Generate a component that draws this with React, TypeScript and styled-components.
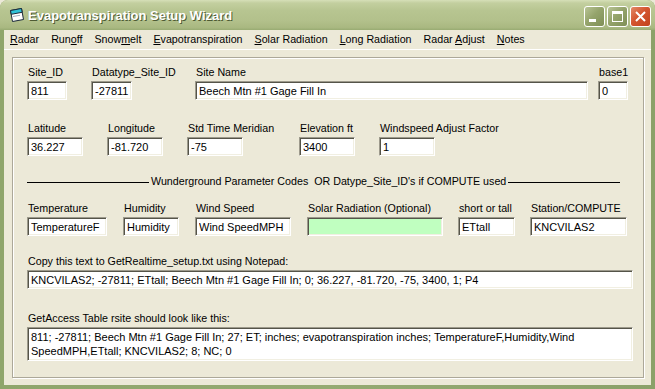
import styled, { createGlobalStyle } from "styled-components";

const GlobalStyle = createGlobalStyle`
  html, body {
    margin: 0;
    padding: 0;
    background: #ece9d8;
  }
  body {
    width: 655px;
    height: 389px;
    overflow: hidden;
    font-family: "Liberation Sans", Arial, sans-serif;
  }
`;

type MenuEntry = { pre: string; key: string; post: string };

const menu: MenuEntry[] = [
  { pre: "", key: "R", post: "adar" },
  { pre: "Run", key: "o", post: "ff" },
  { pre: "Snow", key: "m", post: "elt" },
  { pre: "", key: "E", post: "vapotranspiration" },
  { pre: "", key: "S", post: "olar Radiation" },
  { pre: "", key: "L", post: "ong Radiation" },
  { pre: "Radar ", key: "A", post: "djust" },
  { pre: "", key: "N", post: "otes" },
];

type FieldDef = { label: string; value: string; w: number; at: number; green?: boolean };

const row1: FieldDef[] = [
  { label: "Site_ID", value: "811", w: 40, at: 0 },
  { label: "Datatype_Site_ID", value: "-27811", w: 41, at: 24 },
  { label: "Site Name", value: "Beech Mtn #1 Gage Fill In", w: 393, at: 63 },
  { label: "base1", value: "0", w: 30, at: 10 },
];

const row2: FieldDef[] = [
  { label: "Latitude", value: "36.227", w: 56, at: 0 },
  { label: "Longitude", value: "-81.720", w: 56, at: 24 },
  { label: "Std Time Meridian", value: "-75", w: 56, at: 24 },
  { label: "Elevation ft", value: "3400", w: 56, at: 56 },
  { label: "Windspeed Adjust Factor", value: "1", w: 56, at: 24 },
];

const row3: FieldDef[] = [
  { label: "Temperature", value: "TemperatureF", w: 80, at: 0 },
  { label: "Humidity", value: "Humidity", w: 56, at: 16 },
  { label: "Wind Speed", value: "Wind SpeedMPH", w: 96, at: 16 },
  { label: "Solar Radiation (Optional)", value: "", w: 136, at: 16, green: true },
  { label: "short or tall", value: "ETtall", w: 57, at: 15 },
  { label: "Station/COMPUTE", value: "KNCVILAS2", w: 97, at: 15 },
];

function FieldRow({ fields, top }: { fields: FieldDef[]; top: number }) {
  return (
    <Row $top={top}>
      {fields.map((f) => (
        <Field key={f.label} $w={f.w} $at={f.at}>
          <Label>{f.label}</Label>
          <TextBox readOnly value={f.value} $green={f.green} />
        </Field>
      ))}
    </Row>
  );
}

function FormIcon() {
  return (
    <svg width="16" height="16" viewBox="0 0 16 16">
      <path d="M1.5 3.5 L12.5 1.5 L14.5 12.5 L3.5 14.5 Z" fill="#fff" stroke="#1b2a3a" />
      <path d="M1.5 3.5 L12.5 1.5 L13.2 5.3 L2.2 7.3 Z" fill="#2fc3d8" stroke="#1b2a3a" />
      <path d="M4 9.5 L11 8.3" stroke="#9fb0c0" />
    </svg>
  );
}

export default function App() {
  return (
    <>
      <GlobalStyle />
      <Window>
        <TitleBar>
          <FormIcon />
          <Title>Evapotranspiration Setup Wizard</Title>
          <Caption>
            <CapButton aria-label="Minimize">
              <svg width="21" height="21" viewBox="0 0 21 21">
                <rect x="5" y="13" width="7" height="3" fill="#fff" />
              </svg>
            </CapButton>
            <CapButton aria-label="Maximize">
              <svg width="21" height="21" viewBox="0 0 21 21">
                <rect x="5.5" y="5.5" width="10" height="10" fill="none" stroke="#fff" />
                <rect x="5" y="5" width="11" height="3" fill="#fff" />
              </svg>
            </CapButton>
            <CapButton $close aria-label="Close">
              <svg width="21" height="21" viewBox="0 0 21 21">
                <path d="M6 6 L15 15 M15 6 L6 15" stroke="#fff" strokeWidth="2" />
              </svg>
            </CapButton>
          </Caption>
        </TitleBar>

        <Client>
          <MenuBar>
            {menu.map((m) => (
              <MenuItem key={m.pre + m.key + m.post}>
                {m.pre}
                <u>{m.key}</u>
                {m.post}
              </MenuItem>
            ))}
          </MenuBar>

          <Frame>
            <FieldRow fields={row1} top={0} />
            <FieldRow fields={row2} top={22} />

            <Divider>
              <Rule $w={122} />
              <DividerText>Wunderground Parameter Codes  OR Datype_Site_ID's if COMPUTE used</DividerText>
              <Rule $w={112} />
            </Divider>

            <FieldRow fields={row3} top={14} />

            <Block $top={19}>
              <Label>Copy this text to GetRealtime_setup.txt using Notepad:</Label>
              <TextBox readOnly value="KNCVILAS2; -27811; ETtall; Beech Mtn #1 Gage Fill In; 0; 36.227, -81.720, -75, 3400, 1; P4" />
            </Block>

            <Block $top={23}>
              <Label>GetAccess Table rsite should look like this:</Label>
              <MultiBox>
                811; -27811; Beech Mtn #1 Gage Fill In; 27; ET; inches; evapotranspiration inches; TemperatureF,Humidity,Wind
                <br />
                SpeedMPH,ETtall; KNCVILAS2; 8; NC; 0
              </MultiBox>
            </Block>
          </Frame>
        </Client>
      </Window>
    </>
  );
}

const Window = styled.div`
  display: flex;
  flex-direction: column;
  width: 655px;
  height: 389px;
  border-radius: 8px 8px 0 0;
  overflow: hidden;
  background: linear-gradient(90deg, #8fa56b 0%, #95aa72 50%, #8ba169 100%);
`;

const TitleBar = styled.div`
  display: flex;
  align-items: center;
  gap: 3px;
  height: 30px;
  flex: none;
  padding: 0 4px 0 9px;
  box-sizing: border-box;
  background: linear-gradient(
    180deg,
    #d6dfb8 0%,
    #c3cf9f 10%,
    #b7c591 35%,
    #b2c08b 70%,
    #a9b881 92%,
    #98ab72 100%
  );
`;

const Title = styled.div`
  flex: 1;
  color: #fff;
  font-family: "Liberation Sans", Arial, sans-serif;
  font-size: 13px;
  font-weight: bold;
  text-shadow: 1px 1px 0 #4d5a33;
  white-space: nowrap;
`;

const Caption = styled.div`
  display: flex;
  gap: 2px;
  margin-top: 3px;
`;

const CapButton = styled.div<{ $close?: boolean }>`
  width: 21px;
  height: 21px;
  box-sizing: border-box;
  border: 1px solid #fff;
  border-radius: 3px;
  background: ${(p) =>
    p.$close
      ? "linear-gradient(135deg, #e28a6a 0%, #d4552f 45%, #c2431c 100%)"
      : "linear-gradient(135deg, #b8c495 0%, #95a46c 45%, #7f8f56 100%)"};
  svg {
    display: block;
    margin: -1px;
  }
`;

const Client = styled.div`
  display: flex;
  flex-direction: column;
  flex: 1;
  margin: 0 4px 4px;
  background: #ece9d8;
  min-height: 0;
`;

const MenuBar = styled.div`
  display: flex;
  height: 19px;
  align-items: center;
  border-bottom: 1px solid #fff;
`;

const MenuItem = styled.div`
  padding: 0 6px;
  font-size: 10.7px;
  color: #000;
  white-space: pre;
  line-height: 19px;
`;

const Frame = styled.div`
  flex: 1;
  display: flex;
  flex-direction: column;
  margin: 7px 7px 7px 8px;
  padding: 8px 0 0 14px;
  border: 1px solid #aca899;
  box-shadow: inset 1px 1px 0 #fff, 1px 1px 0 #fff;
`;

const Row = styled.div<{ $top: number }>`
  display: flex;
  margin-top: ${(p) => p.$top}px;
`;

const Field = styled.div<{ $w: number; $at: number }>`
  display: flex;
  flex-direction: column;
  gap: 2px;
  width: ${(p) => p.$w}px;
  margin-left: ${(p) => p.$at}px;
`;

const Label = styled.div`
  padding-left: 1px;
  font-size: 10.7px;
  line-height: 13px;
  color: #000;
  white-space: nowrap;
`;

const TextBox = styled.input<{ $green?: boolean }>`
  display: block;
  width: 100%;
  height: 19px;
  margin: 0;
  padding: 0 0 0 3px;
  box-sizing: border-box;
  border: 1px solid;
  border-color: #9d9a8c #fff #fff #9d9a8c;
  box-shadow: inset 1px 1px 0 #555449, inset -1px -1px 0 #f1efe2;
  background: ${(p) => (p.$green ? "#c0ffc0" : "#fff")};
  font-family: "Liberation Sans", Arial, sans-serif;
  font-size: 11px;
  color: #000;
  outline: none;
`;

const Divider = styled.div`
  display: flex;
  align-items: center;
  gap: 2px;
  margin-top: 19px;
  height: 13px;
`;

const Rule = styled.div<{ $w: number }>`
  width: ${(p) => p.$w}px;
  height: 1px;
  background: #000;
  margin-top: 2px;
`;

const DividerText = styled.div`
  font-size: 10.7px;
  line-height: 13px;
  white-space: pre;
  color: #000;
`;

const Block = styled.div<{ $top: number }>`
  display: flex;
  flex-direction: column;
  gap: 2px;
  width: 606px;
  margin-top: ${(p) => p.$top}px;
`;

const MultiBox = styled.div`
  height: 34px;
  padding: 2px 0 0 3px;
  box-sizing: border-box;
  border: 1px solid;
  border-color: #9d9a8c #fff #fff #9d9a8c;
  box-shadow: inset 1px 1px 0 #555449, inset -1px -1px 0 #f1efe2;
  background: #fff;
  font-size: 11px;
  line-height: 14px;
  color: #000;
  white-space: nowrap;
`;
